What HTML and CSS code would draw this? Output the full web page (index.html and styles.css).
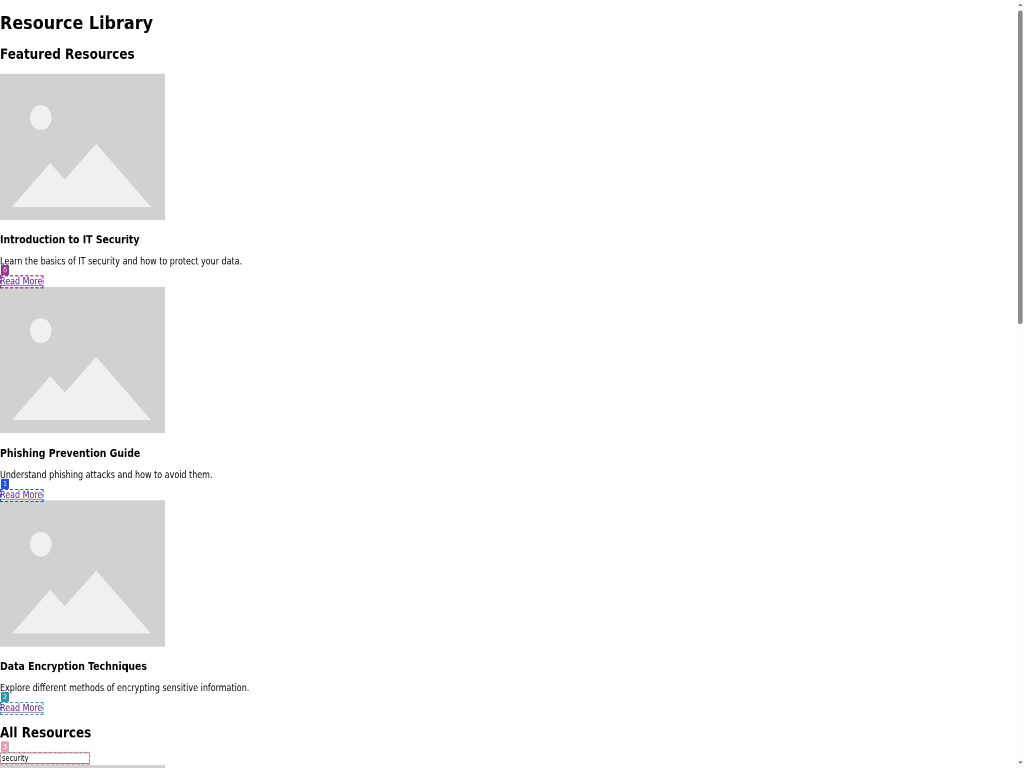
FILE: index.html
```html
<!DOCTYPE html>
<html lang="en">
<head>
<meta charset="utf-8">
<title>Resource Library</title>
<link rel="stylesheet" href="styles.css">
</head>
<body>
<svg width="0" height="0" class="defs"><symbol id="placeholder" viewBox="0 0 165 146" preserveAspectRatio="none"><rect width="165" height="146" fill="#d1d1d1"/><ellipse cx="40.8" cy="43.8" rx="10.8" ry="12.4" fill="#f0f0f0"/><path d="M12 133L50.2 89.2L64.8 105.7L96.2 70L151 133Z" fill="#f0f0f0"/></symbol></svg>
<div class="viewport">
<main class="page">
<h1>Resource Library</h1>
<h2>Featured Resources</h2>
<article>
<svg class="picture"><use href="#placeholder"/></svg>
<h3>Introduction to IT Security</h3>
<p>Learn the basics of IT security and how to protect your data.</p>
<div class="action purple"><a href="#">Read More</a><span class="badge">0</span></div>
</article>
<article>
<svg class="picture"><use href="#placeholder"/></svg>
<h3>Phishing Prevention Guide</h3>
<p>Understand phishing attacks and how to avoid them.</p>
<div class="action blue"><a href="#">Read More</a><span class="badge">1</span></div>
</article>
<article>
<svg class="picture"><use href="#placeholder"/></svg>
<h3>Data Encryption Techniques</h3>
<p>Explore different methods of encrypting sensitive information.</p>
<div class="action teal"><a href="#">Read More</a><span class="badge">2</span></div>
</article>
<h2>All Resources</h2>
<div class="action search pink"><input type="text" value="security"><span class="badge">3</span></div>
<svg class="picture last"><use href="#placeholder"/></svg>
</main>
</div>
<div class="scrollbar"><svg width="7" height="768" viewBox="0 0 7 768"><path d="M1.2 6L3.5 3.5L5.8 6Z" fill="#858585"/><rect x="1" y="10.5" width="4.6" height="313.5" rx="2.2" fill="#8b8b8b"/><path d="M1.2 761.3L3.5 764L5.8 761.3Z" fill="#858585"/></svg></div>
</body>
</html>
```
FILE: styles.css
```css
body {
  margin: 0;
  height: 768px;
  overflow: hidden;
  background: #fff;
  font: 16px/19px "DejaVu Sans", sans-serif;
  color: #000;
}
.defs { position: absolute; }
.viewport { width: 1017px; height: 768px; overflow: hidden; }
.page {
  display: flow-root;
  width: 2034px;
  height: 1344px;
  overflow: hidden;
  background: #fff;
  transform: scale(.5, .5712);
  transform-origin: 0 0;
  will-change: transform;
}
h1 { font-size: 32px; line-height: 38px; margin: 21.44px 0; }
h2 { font-size: 24px; line-height: 28px; margin: 19.92px 0; }
h3 { font-size: 18.72px; line-height: 22px; margin: 18.72px 0 16.92px; transform: scaleY(1.04); }
p { margin: 16px 0; transform: scaleY(1.06); }
.picture { display: block; width: 330px; height: 256px; margin-bottom: 24.5px; }
.last { height: 60px; margin: 0; }
.last use { height: 256px; }
.action { position: relative; width: 87px; height: 19px; }
.action a {
  display: inline-block;
  color: #551a8b;
  white-space: nowrap;
  transform: scaleY(1.06);
}
.action::after {
  content: "";
  position: absolute;
  inset: -1px 0 -3px 0;
  border: 2px dashed var(--mark);
}
.badge {
  position: absolute;
  left: 2px;
  top: -19px;
  width: 16px;
  height: 18px;
  border-radius: 2px;
  background: var(--mark);
  color: #fff;
  font-size: 12px;
  line-height: 18px;
  text-align: center;
}
.purple { --mark: #963296; }
.blue { --mark: #2450e8; }
.teal { --mark: #2b98ae; }
.pink { --mark: #e69eb2; }
.search {
  box-sizing: border-box;
  width: 180px;
  height: 21px;
  margin-bottom: 1px;
  border: 2px solid #858585;
}
.search::after { inset: -3px -2px -3px -2px; }
.search .badge { left: 0; top: -21px; }
.search input {
  display: block;
  box-sizing: border-box;
  width: 174px;
  height: 17px;
  padding: 0 2px;
  border: 0;
  background: transparent;
  color: #000;
  font: 13.333px "DejaVu Sans", sans-serif;
  transform: scaleY(1.06);
}
.scrollbar {
  position: fixed;
  top: 0;
  right: 0;
  width: 7px;
  height: 768px;
  background: #fcfcfc;
}
.scrollbar svg { display: block; }
```
